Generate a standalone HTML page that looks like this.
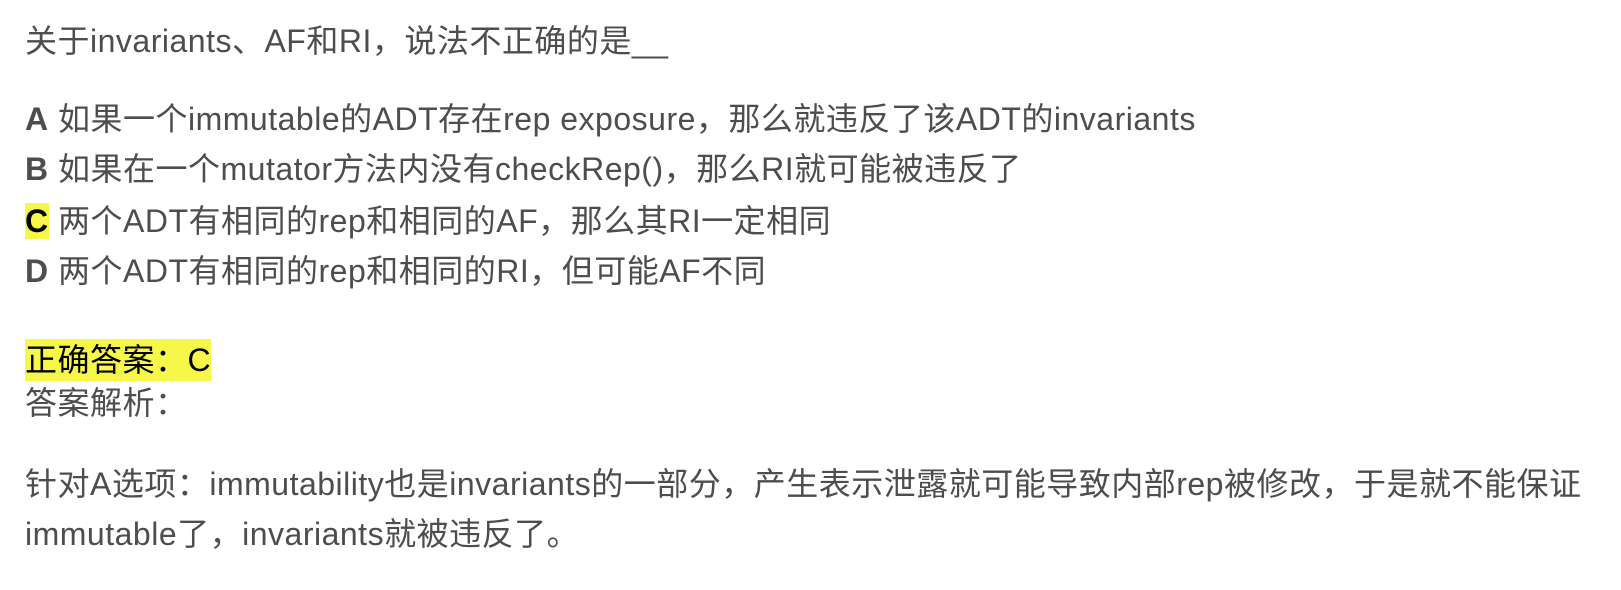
<!DOCTYPE html>
<html><head><meta charset="utf-8"><style>
html,body{margin:0;padding:0;background:#fff;width:1621px;height:590px;overflow:hidden}
body{font-family:"Liberation Sans","Noto Sans CJK SC",sans-serif;font-size:32px;color:#4d4d4d;letter-spacing:0.5px}
.l{position:absolute;left:25px;height:42px;line-height:42px;white-space:nowrap}
b{font-weight:bold}
.hl{background:#f7f74a;color:#000}
</style></head><body>
<div class="l" style="top:20px">关于invariants、AF和RI，说法不正确的是__</div>
<div class="l" style="top:98px"><b>A</b> 如果一个immutable的ADT存在rep exposure，那么就违反了该ADT的invariants</div>
<div class="l" style="top:148px"><b>B</b> 如果在一个mutator方法内没有checkRep()，那么RI就可能被违反了</div>
<div class="l" style="top:200px"><b class="hl">C</b> 两个ADT有相同的rep和相同的AF，那么其RI一定相同</div>
<div class="l" style="top:250px"><b>D</b> 两个ADT有相同的rep和相同的RI，但可能AF不同</div>
<div class="l" style="top:339px"><span class="hl" style="display:inline-block;height:42px">正确答案：C</span></div>
<div class="l" style="top:382px">答案解析：</div>
<div class="l" style="top:463px">针对A选项：immutability也是invariants的一部分，产生表示泄露就可能导致内部rep被修改，于是就不能保证</div>
<div class="l" style="top:513px">immutable了，invariants就被违反了。</div>
</body></html>
